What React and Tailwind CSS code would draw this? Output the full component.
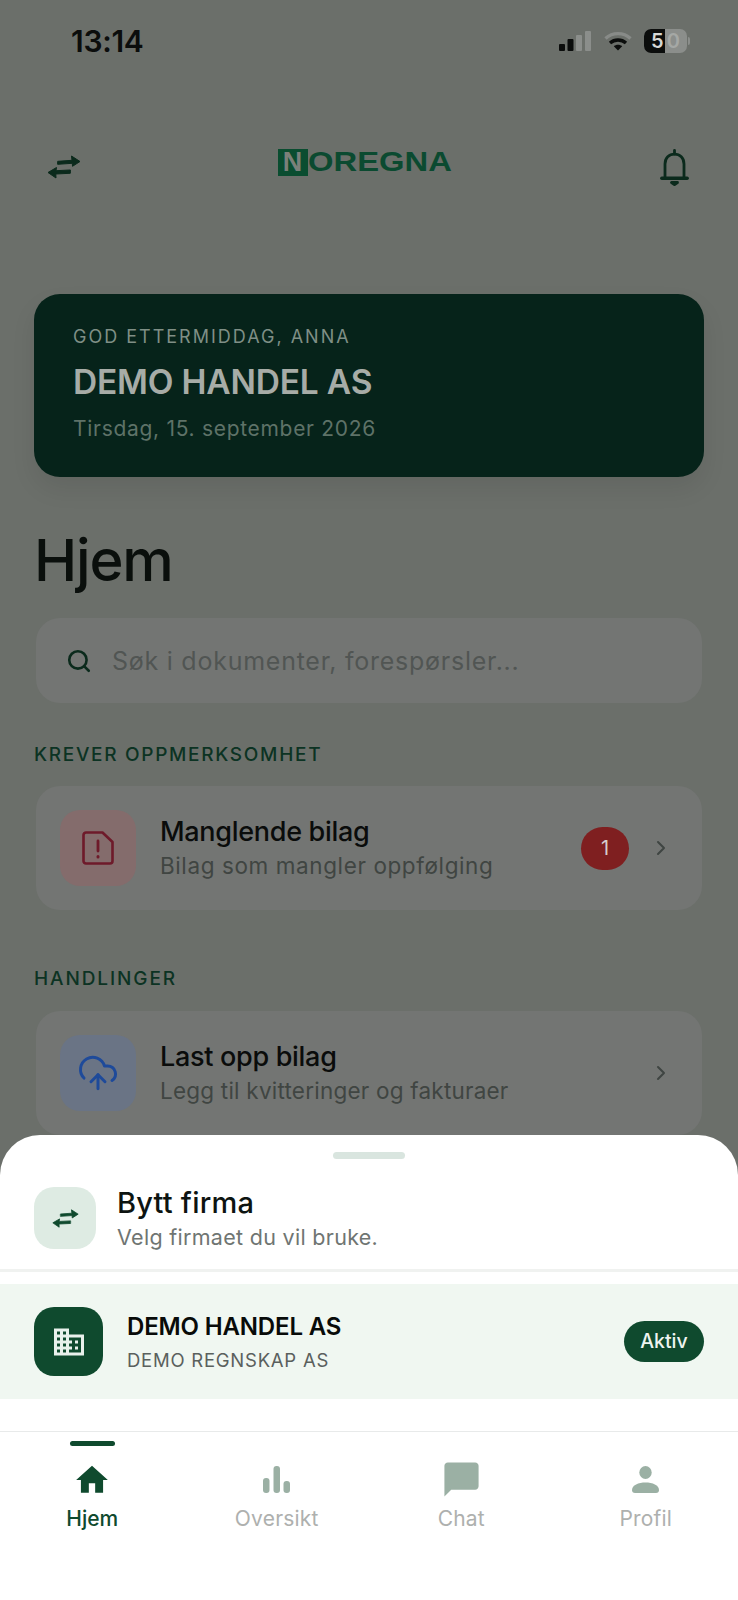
import React from "react";
import { Search, ChevronRight, CloudUpload } from "lucide-react";
import { MdDomain, MdHome, MdChatBubble } from "react-icons/md";

const Swap = ({ className }) => (
  <svg viewBox="0 0 34 24" className={className} fill="currentColor" stroke="currentColor" strokeWidth="1" strokeLinecap="round" strokeLinejoin="round">
    <path d="M11 6.300 25 5.300 24.500 1 33 6.500 25.500 11.300 25.300 8.300 11 9.300z" />
    <path d="M23 15 9 15.700 9.500 12.500 1 17.500 9 23 8.800 19 23 18.300z" />
  </svg>
);

const Bell = ({ className }) => (
  <svg viewBox="0 0 29 37" className={className} fill="none" stroke="currentColor" strokeWidth="2.8" strokeLinecap="round" strokeLinejoin="round">
    <path d="M14.500 1.500v3.500" />
    <path d="M5 28V15C5 9 9 5.200 14.500 5.200S24 9 24 15v13" />
    <path d="M1.800 29.200h25.400" strokeWidth="3.400" />
    <path d="M11.500 33.500h6l-3 2.200z" fill="currentColor" />
  </svg>
);

const FileAlert = ({ className }) => (
  <svg viewBox="0 0 32 34" className={className} fill="none" stroke="currentColor" strokeWidth="2.6" strokeLinejoin="round" strokeLinecap="round">
    <path d="M4 1.500h16.500L30.500 11v19a2.500 2.500 0 0 1-2.500 2.500H4A2.500 2.500 0 0 1 1.500 30V4A2.500 2.500 0 0 1 4 1.500z" />
    <path d="M16 10v10" strokeWidth="2.800" />
    <path d="M16 25.500v.4" strokeWidth="3" />
  </svg>
);

const Bars = ({ className }) => (
  <svg viewBox="0 0 27 27" className={className} fill="currentColor">
    <rect x="0" y="12" width="6.500" height="15" rx="3" />
    <rect x="10.500" y="0" width="6.500" height="27" rx="3" />
    <rect x="20.500" y="15" width="6.500" height="12" rx="3" />
  </svg>
);

const Person = ({ className }) => (
  <svg viewBox="0 0 27 27" className={className} fill="currentColor">
    <ellipse cx="13.500" cy="6.500" rx="6.200" ry="6.500" />
    <path d="M0 24c0-5 6.500-7.500 13.500-7.500S27 19 27 24c0 2-1 3-3 3H3c-2 0-3-1-3-3z" />
  </svg>
);

const Signal = () => (
  <svg viewBox="0 0 32 20" className="w-[32px] h-[20px]">
    <rect x="0" y="13" width="6" height="7" rx="1" fill="#0b0d0c" />
    <rect x="8.500" y="8" width="6" height="12" rx="1" fill="#0b0d0c" />
    <rect x="17" y="4" width="6" height="16" rx="1" fill="#8b8e8b" />
    <rect x="26" y="0" width="6" height="20" rx="1" fill="#8b8e8b" />
  </svg>
);

const Wifi = () => (
  <svg viewBox="0 0 28 20" className="w-[28px] h-[20px]" fill="none">
    <path d="M1.500 7.500C8.500 1 19.500 1 26.500 7.500" stroke="#888b88" strokeWidth="3.400" />
    <path d="M6 12c4.500-4 11.500-4 16 0" stroke="#0b0d0c" strokeWidth="3.400" />
    <path d="M14 19.500 9.800 15.300c2.400-2 6-2 8.400 0z" fill="#0b0d0c" />
  </svg>
);

function Row({ iconBg, icon, title, sub, subTrack, badge }) {
  return (
    <div className="flex items-center h-[124px] rounded-[24px] bg-[#737573] pl-[24px] pr-[29px] mx-[2px]">
      <div className={`w-[76px] h-[76px] rounded-[20px] flex items-center justify-center shrink-0 ${iconBg}`}>{icon}</div>
      <div className="ml-[24px] mb-[2px] flex-1 flex flex-col">
        <div className="text-[27px] leading-[36px] font-medium text-[#0a0c0b] tracking-[-0.3px]">{title}</div>
        <div className={`text-[22.500px] leading-[30px] mt-[1px] text-[#404542] ${subTrack}`}>{sub}</div>
      </div>
      {badge && (
        <div className="w-[48px] h-[43px] mr-[20px] rounded-full bg-[#7f1f20] flex items-center justify-center text-[20px] text-[#d6cdcd]">{badge}</div>
      )}
      <ChevronRight className="w-[24px] h-[24px] text-[#3f4542]" strokeWidth={2} />
    </div>
  );
}

function NavItem({ icon, label, active }) {
  return (
    <div className="relative flex-1 flex flex-col items-center">
      {active && <div className="absolute top-[9px] w-[45px] h-[5px] rounded-full bg-[#0f4a2e]" />}
      <div className={`h-[41px] mt-[27px] flex items-center justify-center ${active ? "text-[#0f4a2e]" : "text-[#9bb0a4]"}`}>{icon}</div>
      <div className={`text-[21px] leading-[28px] mt-[5px] ${active ? "font-medium text-[#0f4a2e]" : "text-[#aeb0ae] tracking-[0.2px]"}`}>{label}</div>
    </div>
  );
}

export default function App() {
  return (
    <div className="relative w-[738px] h-[1600px] overflow-hidden bg-[#6b6f6a] font-['Inter',sans-serif]">
      {/* status */}
      <div className="h-[82px] flex items-center justify-between pl-[71px] pr-[48px]">
        <div className="text-[30px] mt-[1px] font-semibold text-[#0b0d0c] tracking-[-0.3px]">13:14</div>
        <div className="flex items-center">
          <Signal />
          <div className="ml-[13px]"><Wifi /></div>
          <div className="ml-[12px] relative w-[43px] h-[24px] rounded-[7px] bg-[#8b8e8b] overflow-hidden flex items-center justify-center text-[20px] font-semibold">
            <div className="absolute left-0 top-0 bottom-0 w-[21px] bg-[#0b0d0c]" />
            <span className="relative flex gap-[3px]"><span className="text-[#d5d7d5]">5</span><span className="text-[#a5a8a5]">0</span></span>
          </div>
          <div className="ml-[1px] w-[2px] h-[8px] rounded-r-full bg-[#8b8e8b]" />
        </div>
      </div>

      {/* header */}
      <div className="mt-[55px] h-[60px] flex items-center justify-between pl-[47px] pr-[49px]">
        <Swap className="w-[34px] h-[24px] text-[#0b2a1c]" />
        <div className="flex items-center mr-[14px] mt-[-10px]">
          <div className="w-[30px] h-[27px] bg-[#0a4d30] flex items-center justify-center text-[27px] leading-none font-['Liberation_Sans',sans-serif] font-bold text-[#7b807a]">N</div>
          <div className="w-[142px] origin-left scale-x-[1.17] text-[28px] leading-none font-['Liberation_Sans',sans-serif] font-bold text-[#0b4a30]">OREGNA</div>
        </div>
        <Bell className="w-[29px] h-[37px] text-[#0b2a1c]" />
      </div>

      {/* hero */}
      <div className="mt-[97px] mx-[34px] h-[183px] rounded-[26px] bg-[#06231a] pl-[39px] flex flex-col shadow-[0_12px_24px_rgba(0,0,0,0.08)]">
        <div className="mt-[32px] text-[18px] leading-[22px] text-[#7f8f86] tracking-[2px]">GOD ETTERMIDDAG, ANNA</div>
        <div className="mt-[14px] text-[33.500px] leading-[40px] font-semibold text-[#a7aca7] tracking-[-0.2px]">DEMO HANDEL AS</div>
        <div className="mt-[13px] text-[21px] leading-[28px] text-[#5e7268] tracking-[0.7px]">Tirsdag, 15. september 2026</div>
      </div>

      {/* title */}
      <div className="mt-[51px] ml-[34px] text-[58px] leading-[64px] font-medium text-[#0a0f0c] tracking-[-1.2px]">Hjem</div>

      {/* search */}
      <div className="mt-[26px] mx-[36px] h-[85px] rounded-[24px] bg-[#737573] flex items-center pl-[30px]">
        <Search className="w-[26px] h-[26px] text-[#0b2a1c]" strokeWidth={2.400} />
        <div className="ml-[20px] mt-[2px] text-[25px] text-[#515553] tracking-[0.75px]">Søk i dokumenter, forespørsler...</div>
      </div>

      {/* attention */}
      <div className="mt-[40px] ml-[34px] text-[19px] leading-[24px] font-medium text-[#0c3323] tracking-[1.7px]">KREVER OPPMERKSOMHET</div>
      <div className="mt-[19px] mx-[34px]">
        <Row iconBg="bg-[#846c6c]" icon={<FileAlert className="w-[32px] h-[34px] text-[#6e1a2a]" />} title="Manglende bilag" sub="Bilag som mangler oppfølging" subTrack="tracking-[0.6px]" badge="1" />
      </div>

      <div className="mt-[57px] ml-[34px] text-[19px] leading-[24px] font-medium text-[#0c3323] tracking-[1.9px]">HANDLINGER</div>
      <div className="mt-[20px] mx-[34px]">
        <Row iconBg="bg-[#6a7485]" icon={<CloudUpload className="w-[42px] h-[42px] text-[#1e4a9a]" strokeWidth={1.700} />} title="Last opp bilag" sub="Legg til kvitteringer og fakturaer" subTrack="tracking-[0.22px]" />
      </div>

      {/* sheet + nav */}
      <div className="absolute left-0 right-0 bottom-0 h-[465px] bg-white rounded-t-[40px] flex flex-col">
        <div className="mt-[17px] mx-auto w-[72px] h-[7px] rounded-full bg-[#d9e5df]" />
        <div className="mt-[26px] flex items-center px-[34px]">
          <div className="w-[62px] h-[62px] rounded-[20px] bg-[#deebe3] flex items-center justify-center">
            <Swap className="w-[27px] h-[19px] text-[#0f4a2e]" />
          </div>
          <div className="ml-[21px] flex flex-col">
            <div className="text-[29px] leading-[36px] font-medium text-[#0d1411] tracking-[0.2px]">Bytt firma</div>
            <div className="text-[21.500px] leading-[28px] mt-[2px] text-[#6f7572] tracking-[0.3px]">Velg firmaet du vil bruke.</div>
          </div>
        </div>
        <div className="mt-[18px] h-[3px] bg-[#f0f2f0]" />
        <div className="mt-[12px] h-[115px] bg-[#f0f7f1] flex items-center pl-[34px] pr-[34px]">
          <div className="w-[69px] h-[69px] rounded-[20px] bg-[#0f4a2e] flex items-center justify-center">
            <MdDomain className="w-[36px] h-[36px] text-[#e9f1ec]" />
          </div>
          <div className="ml-[24px] flex-1 flex flex-col">
            <div className="text-[24px] leading-[32px] font-semibold text-[#080b09] tracking-[-0.15px]">DEMO HANDEL AS</div>
            <div className="mt-[5px] text-[18.500px] leading-[24px] text-[#5a605d] tracking-[0.75px]">DEMO REGNSKAP AS</div>
          </div>
          <div className="w-[80px] h-[41px] rounded-full bg-[#0f4a2e] flex items-center justify-center text-[19.500px] font-medium text-[#eef4f0]">Aktiv</div>
        </div>
        <div className="mt-[32px] flex-1 border-t border-[#e8eaea] flex">
          <NavItem active label="Hjem" icon={<MdHome className="w-[38px] h-[38px]" />} />
          <NavItem label="Oversikt" icon={<Bars className="w-[27px] h-[27px]" />} />
          <NavItem label="Chat" icon={<MdChatBubble className="w-[41px] h-[41px]" />} />
          <NavItem label="Profil" icon={<Person className="w-[27px] h-[27px]" />} />
        </div>
      </div>
    </div>
  );
}
